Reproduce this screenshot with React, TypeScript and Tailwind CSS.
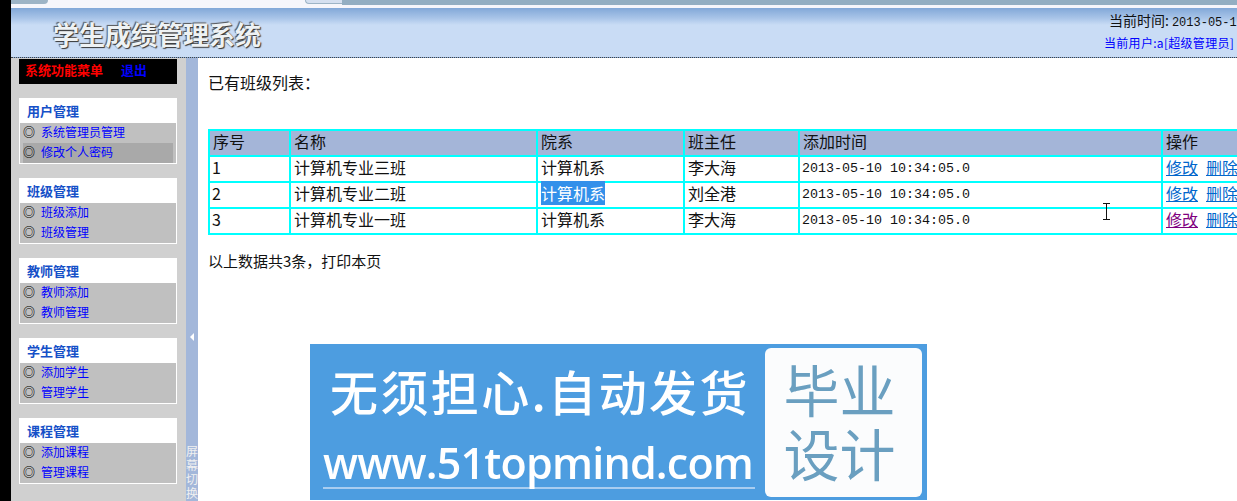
const sections = [
  { title: '用户管理', items: ['系统管理员管理', '修改个人密码'], active: 1 },
  { title: '班级管理', items: ['班级添加', '班级管理'] },
  { title: '教师管理', items: ['教师添加', '教师管理'] },
  { title: '学生管理', items: ['添加学生', '管理学生'] },
  { title: '课程管理', items: ['添加课程', '管理课程'] },
];

const rows = [
  { id: 1, name: '计算机专业三班', teacher: '李大海' },
  { id: 2, name: '计算机专业二班', teacher: '刘全港', selected: true },
  { id: 3, name: '计算机专业一班', teacher: '李大海', visited: true },
];

const cjk = "font-['Noto_Sans_CJK_SC','Liberation_Sans',sans-serif]";

function Sidebar() {
  return (
    <aside className="w-[175px] shrink-0 bg-[#d0d0d0] pl-2">
      <div className="mt-px flex h-[25px] w-[158px] items-center gap-[18px] bg-black pb-[3px] pl-[6px] text-[13px] font-bold">
        <span className="text-[#ff0000]">系统功能菜单</span>
        <span className="text-[#0000ff]">退出</span>
      </div>
      <div className="mt-[14px] flex w-[158px] flex-col gap-[14px]">
        {sections.map((section) => (
          <div key={section.title} className="h-[66px] border border-white bg-white">
            <div className="flex h-[24px] items-center pb-px pl-[7px] text-[13px] font-bold text-[#1550c8]">
              {section.title}
            </div>
            <ul className="h-[40px] bg-[#c0c0c0] px-[3px]">
              {section.items.map((item, i) => (
                <li
                  key={item}
                  className={`flex h-[20px] items-center pb-[2px] text-xs text-[#0000ff] ${section.active === i ? 'bg-[#a9a9a9]' : ''}`}
                >
                  <span className="w-[18px] text-xs leading-none font-bold text-black">◎</span>
                  {item}
                </li>
              ))}
            </ul>
          </div>
        ))}
      </div>
    </aside>
  );
}

function Splitter() {
  return (
    <div className="flex w-[12px] shrink-0 flex-col items-center bg-[#a3b7da]">
      <div className="mt-[275px] h-0 w-0 border-y-[4px] border-r-[4px] border-y-transparent border-r-white" />
      <div className="mt-[103px] w-[12px] text-xs leading-[14px] text-[#f0f0f0]">屏幕切换</div>
    </div>
  );
}

function ClassTable() {
  const cell = 'bg-white pb-[3px] text-left align-middle leading-[21px] font-normal';
  const head = 'bg-[#a4b5d8] pb-[3px] pl-[3px] text-left leading-[21px] font-normal';
  return (
    <table className="w-[1100px] table-fixed border-separate border-spacing-[2px] bg-[#00ffff] text-base text-[#111]">
      <colgroup>
        <col className="w-[79px]" />
        <col className="w-[245px]" />
        <col className="w-[145px]" />
        <col className="w-[113px]" />
        <col className="w-[361px]" />
        <col />
      </colgroup>
      <thead>
        <tr className="h-[24px]">
          {['序号', '名称', '院系', '班主任', '添加时间', '操作'].map((h) => (
            <th key={h} className={head}>
              {h}
            </th>
          ))}
        </tr>
      </thead>
      <tbody>
        {rows.map((row) => (
          <tr key={row.id} className="h-[24px]">
            <td className={`${cell} pl-[2px]`}>{row.id}</td>
            <td className={`${cell} pl-[3px]`}>{row.name}</td>
            <td className={`${cell} pl-[3px]`}>
              <span className={row.selected ? 'bg-[#3390ea] text-white' : ''}>计算机系</span>
            </td>
            <td className={`${cell} pl-[3px]`}>{row.teacher}</td>
            <td className="bg-white pl-[2px] font-['Liberation_Mono',monospace] text-[13.33px] leading-[24px]">
              2013-05-10 10:34:05.0
            </td>
            <td className={`${cell} pl-[3px]`}>
              <a className={`underline ${row.visited ? 'text-[#800080]' : 'text-[#0066cc]'}`}>修改</a>
              <a className="ml-2 text-[#0066cc] underline">删除</a>
            </td>
          </tr>
        ))}
      </tbody>
    </table>
  );
}

function Banner() {
  return (
    <div className="ml-[112px] mt-[72px] flex h-[156px] w-[617px] items-center bg-[#4d9de0] pl-[13px] pr-[5px] text-white blur-[0.6px]">
      <div className="mt-[16px] flex w-[432px] flex-col self-start">
        <div className="pl-[7px] text-[48px] leading-[60px] font-medium tracking-[2.4px] whitespace-nowrap">无须担心.自动发货</div>
        <div className="mt-[19px] border-b-2 border-[#a8cdf0] font-['Open_Sans',sans-serif] text-[43px] leading-[48px] font-semibold tracking-[-0.8px] whitespace-nowrap">
          www.51topmind.com
        </div>
      </div>
      <div className="ml-[10px] flex h-[149px] w-[157px] flex-col items-center justify-center rounded-md bg-[#fbfcfd] pb-[4px] pr-[8px] text-[56px] leading-[64px] text-[#6a9fc0]">
        <span>毕业</span>
        <span>设计</span>
      </div>
    </div>
  );
}

export default function App() {
  return (
    <div className={`relative flex h-[501px] w-full overflow-hidden bg-white ${cjk}`}>
      <div className="w-[11px] shrink-0 bg-black" />
      <div className="flex min-w-0 flex-1 flex-col">
        <div className="flex h-[8px] shrink-0 items-start bg-[#f6f6fb]">
          <div className="h-[4px] w-[37px] rounded-br-md bg-[#9db4c6]" />
          <div className="ml-[257px] h-[4px] w-[37px] rounded-bl-md border-b border-l border-[#9db4c6] bg-[#d5e0f0]" />
          <div className="h-[5px] flex-1 bg-[#93aec2]" />
        </div>
        <header className="flex h-[50px] shrink-0 justify-between border-b border-dotted border-[#444] bg-[linear-gradient(#82a8d8_0px,#a8c4e8_10px,#c9dcf5_17px,#c9dcf5_100%)]">
          <h1 className="ml-[42px] mt-[9px] text-[26px] leading-[34px] font-bold text-[#eef2f4] [text-shadow:1px_1px_1px_#333,-1px_-1px_1px_#555]">
            学生成绩管理系统
          </h1>
          <div className="flex w-[133px] shrink-0 flex-col overflow-hidden whitespace-nowrap pt-[2px]">
            <div className="pl-[5px] text-sm leading-[20px] text-[#111]">
              当前时间:<span className="pl-[3px] font-['Liberation_Mono',monospace] text-xs">2013-05-1</span>
            </div>
            <div className="mt-[4px] text-xs leading-[16px] tracking-[0.3px] text-[#0000ff]">当前用户:a[超级管理员]</div>
          </div>
        </header>
        <div className="flex min-h-0 flex-1">
          <Sidebar />
          <Splitter />
          <main className="min-w-0 flex-1 overflow-hidden">
            <p className="ml-[10px] mt-[13px] text-base leading-[22px] text-[#111]">已有班级列表：</p>
            <div className="ml-[10px] mt-[36px]">
              <ClassTable />
            </div>
            <p className="ml-[10px] mt-[15px] text-[15px] leading-[22px] text-[#111]">以上数据共3条，打印本页</p>
            <Banner />
          </main>
        </div>
      </div>
      {/* mouse cursor */}
      <svg className="absolute left-[1102px] top-[203px]" width="9" height="17" viewBox="0 0 9 17" fill="none" stroke="#111">
        <path d="M1 .5h7M4.5 .5v16M1 16.5h7" />
      </svg>
    </div>
  );
}
